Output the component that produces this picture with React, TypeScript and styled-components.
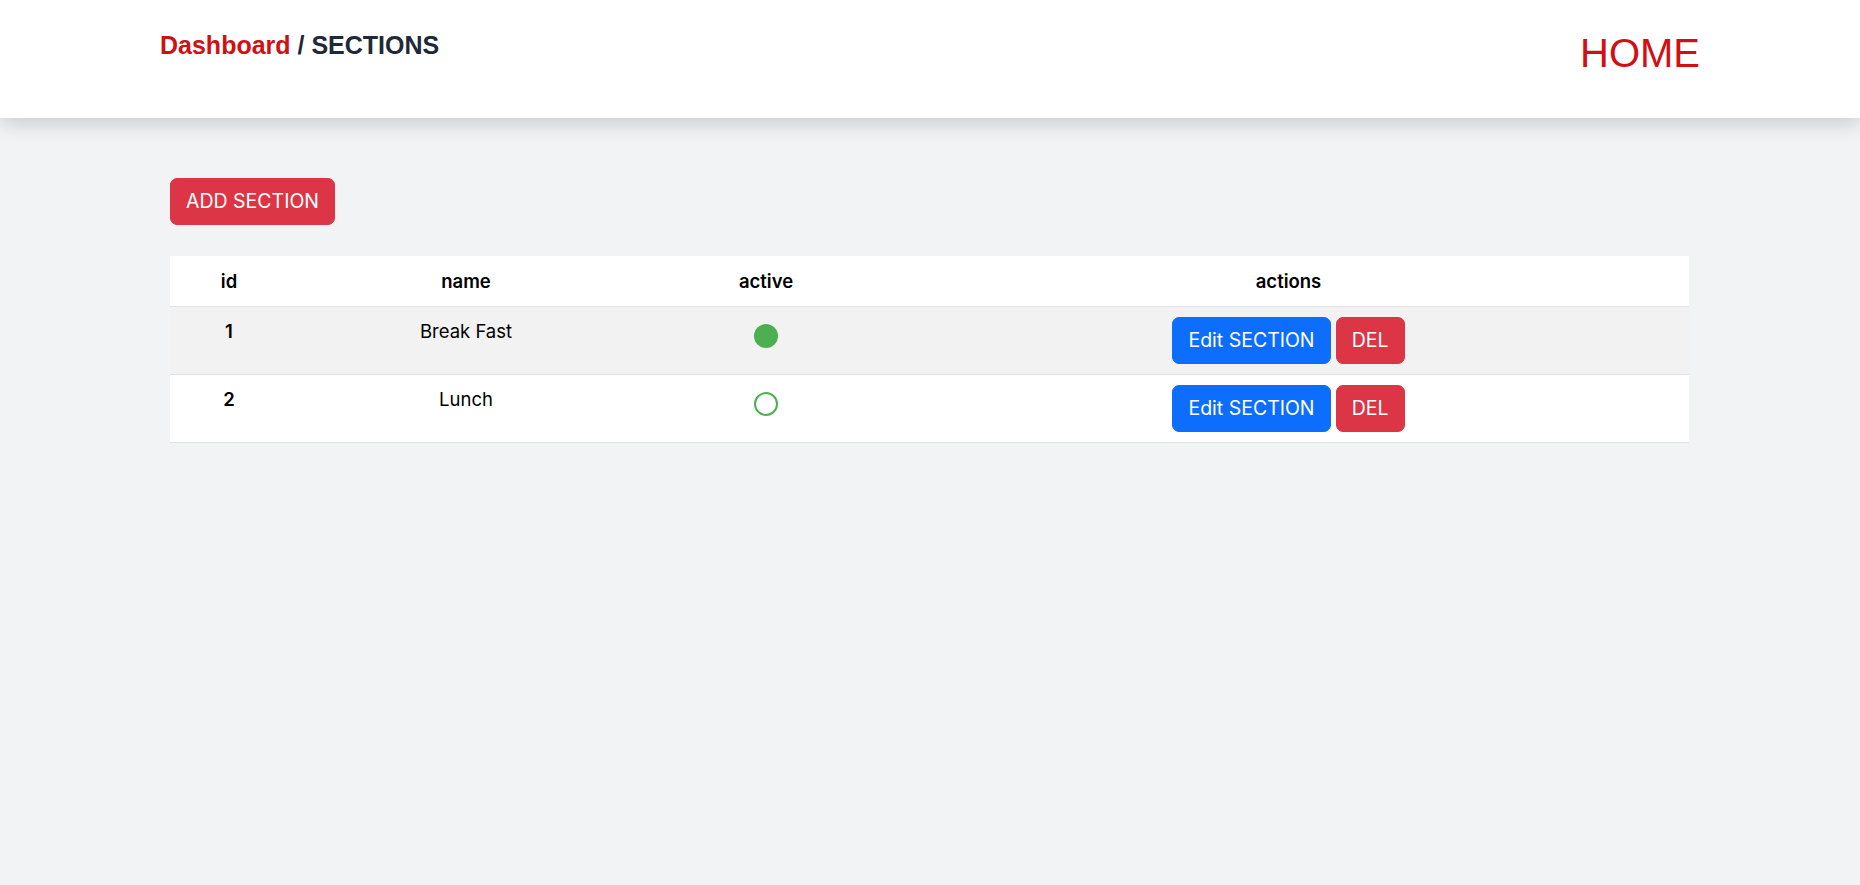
import styled, { createGlobalStyle } from "styled-components"

const sections = [
    { id: 1, name: "Break Fast", active: true },
    { id: 2, name: "Lunch", active: false }
]

const GlobalStyle = createGlobalStyle`
    html, body {
        margin: 0;
        padding: 0;
        background-color: #f2f3f5;
    }
    * {
        box-sizing: border-box;
    }
`

export default function App() {
    return <Page>
        <GlobalStyle />
        <Header>
            <Crumbs>
                <CrumbLink>Dashboard</CrumbLink> / SECTIONS
            </Crumbs>
            <HomeLink>HOME</HomeLink>
        </Header>
        <Main>
            <Button $variant="danger">ADD SECTION</Button>
            <Table>
                <thead>
                    <tr>
                        <Th style={{ width: 118 }}>id</Th>
                        <Th style={{ width: 356 }}>name</Th>
                        <Th style={{ width: 244 }}>active</Th>
                        <Th>actions</Th>
                    </tr>
                </thead>
                <tbody>
                    {sections.map((s, i) => (
                        <Row key={s.id} $striped={i % 2 === 0}>
                            <IdCell>{s.id}</IdCell>
                            <Td>{s.name}</Td>
                            <Td><Dot $filled={s.active} /></Td>
                            <Td>
                                <Button $variant="primary">Edit SECTION</Button>{" "}
                                <Button $variant="danger">DEL</Button>
                            </Td>
                        </Row>
                    ))}
                </tbody>
            </Table>
        </Main>
    </Page>
}

const Page = styled.div`
    min-height: 100vh;
    background-color: #f2f3f5;
`

const Header = styled.header`
    height: 118px;
    background-color: #fff;
    display: flex;
    justify-content: space-between;
    align-items: flex-start;
    padding: 31px 160px 0 160px;
    box-shadow: 0 6px 18px rgba(0, 0, 0, 0.16);
    font-family: "Liberation Sans", Arial, sans-serif;
`

const Crumbs = styled.div`
    font-size: 25px;
    font-weight: bold;
    color: #1f2937;
`

const CrumbLink = styled.span`
    color: #d10f14;
    cursor: pointer;
`

const HomeLink = styled.div`
    font-size: 40px;
    color: #d10f14;
    cursor: pointer;
`

const Main = styled.main`
    padding: 60px 171px 0 170px;
    font-family: Inter, "Noto Sans", sans-serif;
`

const Button = styled.button<{ $variant: "primary" | "danger" }>`
    display: inline-block;
    font-family: inherit;
    font-size: 19.5px;
    line-height: 29px;
    padding: 8px 15px;
    border: 1px solid ${p => p.$variant === "primary" ? "#0d6efd" : "#dc3545"};
    border-radius: 7px;
    color: #fff;
    background-color: ${p => p.$variant === "primary" ? "#0d6efd" : "#dc3545"};
    cursor: pointer;
`

const Table = styled.table`
    width: 100%;
    margin-top: 31px;
    border-collapse: collapse;
    background-color: #fff;
    font-size: 18.5px;
    color: #212529;
`

const Th = styled.th`
    padding: 10.5px 10px;
    line-height: 29px;
    font-weight: 600;
    color: #000;
    text-align: center;
    border-bottom: 1px solid #dee2e6;
`

const Row = styled.tr<{ $striped: boolean }>`
    background-color: ${p => p.$striped ? "#f2f2f2" : "#fff"};
    border-bottom: 1px solid #dee2e6;
`

const Td = styled.td`
    padding: 10px;
    line-height: 29px;
    text-align: center;
    vertical-align: top;
    color: #000;
`

const IdCell = styled(Td)`
    font-weight: 600;
`

const Dot = styled.span<{ $filled: boolean }>`
    display: inline-block;
    width: 24px;
    height: 24px;
    margin-top: 7px;
    border-radius: 50%;
    border: 2px solid #4caf50;
    background-color: ${p => p.$filled ? "#4caf50" : "transparent"};
`
